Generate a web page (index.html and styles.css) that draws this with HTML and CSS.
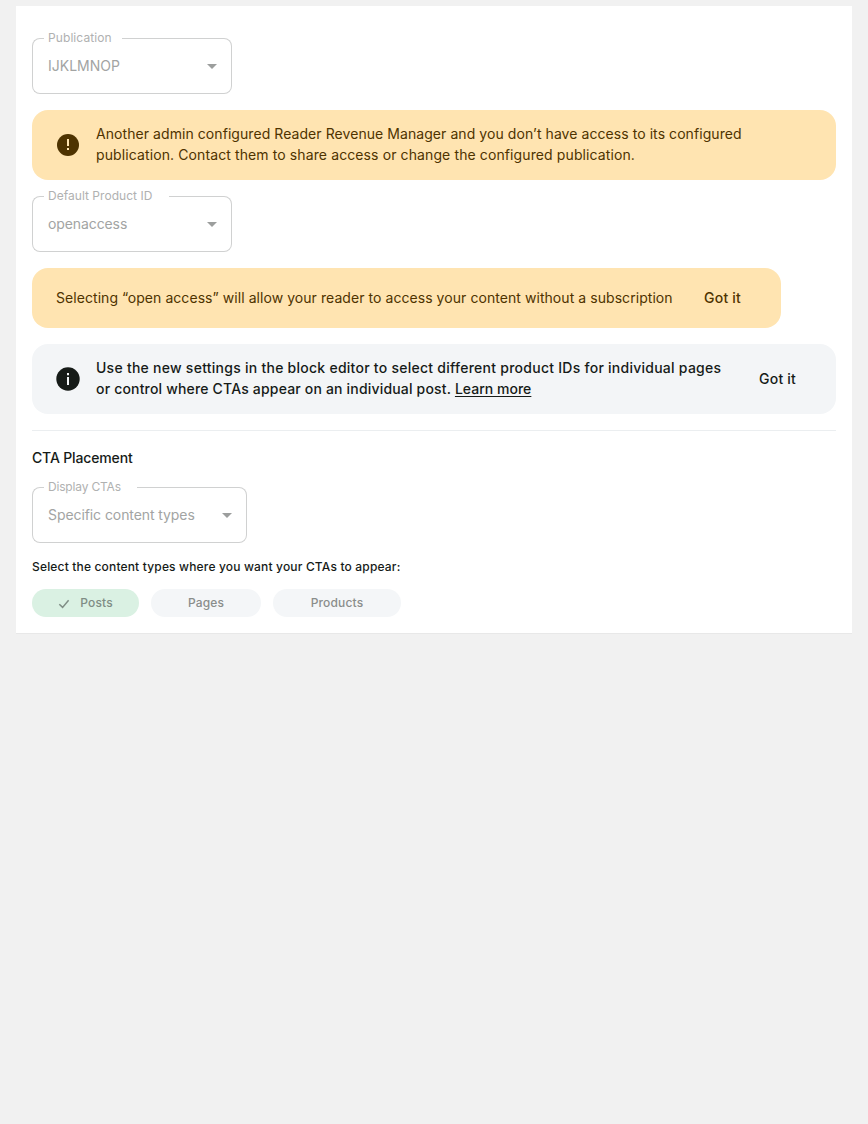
FILE: index.html
```
<!DOCTYPE html>
<html lang="en">
<head>
<meta charset="utf-8">
<title>Reader Revenue Manager</title>
<link rel="stylesheet" href="styles.css">
</head>
<body>
<main class="card">
  <div class="field">
    <div class="field__outline"><span class="field__start"></span><span class="field__label field__label--publication"><span>Publication</span></span><span class="field__end"></span></div>
    <span class="field__value">IJKLMNOP</span>
    <svg class="field__arrow" width="10" height="5" viewBox="0 0 10 5"><path d="M0 0h10L5 5z"/></svg>
  </div>

  <section class="notice notice--warning">
    <svg class="notice__icon" width="24" height="24" viewBox="0 0 24 24"><circle cx="12" cy="12" r="11"/><path class="cut" d="M11 6h2v7h-2zM11 15h2v2h-2z"/></svg>
    <p class="notice__text"><span class="line t-another">Another admin configured Reader Revenue Manager and you don’t have access to its configured</span><span class="line t-contact">publication. Contact them to share access or change the configured publication.</span></p>
  </section>

  <div class="field">
    <div class="field__outline"><span class="field__start"></span><span class="field__label field__label--product"><span>Default Product ID</span></span><span class="field__end"></span></div>
    <span class="field__value t-open">openaccess</span>
    <svg class="field__arrow" width="10" height="5" viewBox="0 0 10 5"><path d="M0 0h10L5 5z"/></svg>
  </div>

  <section class="notice notice--warning notice--inline">
    <p class="notice__text t-selecting">Selecting “open access” will allow your reader to access your content without a subscription</p>
    <button class="notice__button">Got it</button>
  </section>

  <section class="notice notice--info">
    <svg class="notice__icon" width="24" height="24" viewBox="0 0 24 24"><circle cx="12" cy="12" r="11.7"/><path class="cut" d="M11 6h2v2.2h-2zM11 10h2v8h-2z"/></svg>
    <p class="notice__text"><span class="line t-use">Use the new settings in the block editor to select different product IDs for individual pages</span><span class="line t-control">or control where CTAs appear on an individual post. <a class="link">Learn more</a></span></p>
    <button class="notice__button">Got it</button>
  </section>

  <hr class="divider">
  <h2 class="heading">CTA Placement</h2>

  <div class="field field--wide">
    <div class="field__outline"><span class="field__start"></span><span class="field__label field__label--display"><span>Display CTAs</span></span><span class="field__end"></span></div>
    <span class="field__value t-specific">Specific content types</span>
    <svg class="field__arrow" width="10" height="5" viewBox="0 0 10 5"><path d="M0 0h10L5 5z"/></svg>
  </div>

  <p class="hint">Select the content types where you want your CTAs to appear:</p>
  <div class="chips">
    <span class="chip chip--posts"><svg class="chip__check" width="12" height="10" viewBox="0 0 12 10"><path d="M1.3 5.2 4.6 8.4 10.6 1.2"/></svg><span>Posts</span></span>
    <span class="chip chip--pages">Pages</span>
    <span class="chip chip--products">Products</span>
  </div>
</main>
</body>
</html>
```

FILE: styles.css
```
* { box-sizing: border-box; }
body {
  margin: 0;
  padding: 6px 16px;
  background: #f1f1f1;
  color: #161b18;
  font-family: Inter, "Open Sans", sans-serif;
  font-size: 14px;
}
p, h2 { margin: 0; }
.card {
  display: flex;
  flex-direction: column;
  align-items: flex-start;
  height: 628px;
  padding: 32px 16px 0;
  background: #fff;
  border-bottom: 1px solid #e8e8e8;
}
.field {
  position: relative;
  display: flex;
  align-items: center;
  justify-content: space-between;
  width: 200px;
  height: 56px;
  padding: 0 15px 0 16px;
  color: #a2a4a3;
}
.field--wide { width: 215px; }
.field__outline { position: absolute; inset: 0; display: flex; }
.field__start, .field__end { border: 1px solid #d0d1d1; }
.field__start { width: 12px; border-right: 0; border-radius: 8px 0 0 8px; }
.field__end { flex: 1; border-left: 0; border-radius: 0 8px 8px 0; }
.field__label {
  padding-left: 4px;
  border-bottom: 1px solid #d0d1d1;
  font-size: 12px;
  line-height: 16px;
  color: #b0b1b1;
  white-space: nowrap;
}
.field__label > span { display: block; margin-top: -8px; }
.field__label--publication { width: 78px; letter-spacing: 0.09px; }
.field__label--product { width: 125px; letter-spacing: 0.03px; }
.field__label--display { width: 93px; letter-spacing: -0.18px; }
.field__value { padding-bottom: 2px; }
.field__arrow { fill: #9c9e9d; }
.notice {
  display: flex;
  align-items: center;
  width: 100%;
  height: 70px;
  margin: 16px 0;
  padding: 0 24px;
  border-radius: 16px;
}
.notice--warning { background: #ffe4b1; color: #4e3300; }
.notice--inline { width: 749px; height: 60px; }
.notice--inline + .notice { margin-top: 0; }
.notice--info { background: #f3f5f7; font-weight: 500; }
.notice__icon { flex: none; margin-right: 16px; fill: currentColor; }
.notice--warning .cut { fill: #ffe4b1; }
.notice--info .cut { fill: #f3f5f7; }
.notice__text { padding-bottom: 2px; line-height: 21px; white-space: nowrap; }
.line { display: block; }
.link {
  letter-spacing: 0.02px;
  text-decoration: underline;
  text-underline-offset: 2px;
}
.notice__button {
  margin-left: auto;
  padding: 0 16px 0 0;
  border: 0;
  background: none;
  color: inherit;
  font: 500 14px/20px Inter, "Open Sans", sans-serif;
  letter-spacing: 0.2px;
}
.t-another { letter-spacing: 0.066px; }
.t-contact { letter-spacing: 0.108px; }
.t-open { letter-spacing: -0.1px; }
.t-selecting { letter-spacing: 0.06px; }
.t-use { letter-spacing: 0.257px; }
.t-control { letter-spacing: 0.18px; }
.t-specific { letter-spacing: -0.08px; }
.divider { width: 100%; height: 1px; margin: 0; border: 0; background: #ebeef0; }
.heading {
  margin: 17px 0 19px;
  font-size: 14px;
  font-weight: 500;
  line-height: 20px;
  letter-spacing: -0.15px;
}
.hint {
  margin: 14px 0 12px;
  font-size: 12px;
  font-weight: 500;
  line-height: 20px;
  letter-spacing: 0.167px;
  white-space: nowrap;
}
.chips { display: flex; gap: 12px; }
.chip {
  display: flex;
  align-items: center;
  justify-content: center;
  height: 28px;
  padding-bottom: 1px;
  border-radius: 14px;
  background: #f4f6f8;
  color: #8a8d8b;
  font-size: 12px;
  font-weight: 500;
  letter-spacing: 0.15px;
}
.chip--posts { width: 107px; gap: 10px; background: #daf1e3; color: #7f8d85; }
.chip--pages { width: 110px; }
.chip--products { width: 128px; }
.chip__check { position: relative; top: 1px; fill: none; stroke: currentColor; stroke-width: 1.5; }
```
